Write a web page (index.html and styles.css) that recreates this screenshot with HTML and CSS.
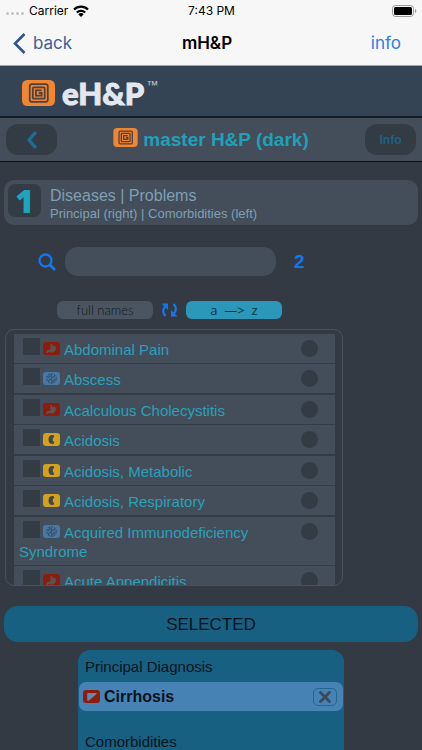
FILE: index.html
```html
<!DOCTYPE html>
<html lang="en">
<head>
<meta charset="utf-8">
<meta name="viewport" content="width=device-width, initial-scale=1">
<title>mH&amp;P</title>
<link rel="stylesheet" href="styles.css">
</head>
<body>
<svg class="defs" aria-hidden="true">
  <symbol id="logo" viewBox="0 0 32 25">
    <rect width="32" height="25" rx="5" fill="#f08532"/>
    <g fill="none" stroke="#4b433f" stroke-width="1.7">
      <rect x="7.5" y="4" width="17.500" height="17" rx="2"/>
      <rect x="10.500" y="7" width="11.500" height="11" rx="1"/>
      <path d="M19 10h-5.500v5H19v-2.500h-2.700"/>
    </g>
  </symbol>
  <symbol id="stomach" viewBox="0 0 17 13">
    <rect width="17" height="13" rx="3" fill="#8c1d0c"/>
    <path d="M7.500 2h1.700v2.500c.8-1.200 3.600-1.200 3.700 1 .2 3-2 5-4.800 5-1.400 0-2.200-.6-3-.3L4.500 11H3.300c0-2 1.200-3.200 2.700-3.200 1.700 0 2-1 1.500-2.600z" fill="#59545a"/>
  </symbol>
  <symbol id="germ" viewBox="0 0 17 13">
    <rect width="17" height="13" rx="3" fill="#4679a5"/>
    <circle cx="8.500" cy="6.500" r="4.700" fill="none" stroke="#344f69" stroke-width="1.200" stroke-dasharray="2 1"/>
    <path d="M5 6l3-3 1 3 3-2M5 9l3-2 1 3 3-3M8 6v2" fill="none" stroke="#344f69" stroke-width="1.100"/>
  </symbol>
  <symbol id="kidney" viewBox="0 0 17 13">
    <rect width="17" height="13" rx="3" fill="#d5a01b"/>
    <path d="M9.500 2C6.500 2 5.500 4 5.500 6.500S6.500 11 9.500 11c2 0 2.200-1.800 1-2.500-1-.7-1-3.300 0-4 1.200-.7 1-2.500-1-2.500z" fill="#3f4750"/>
  </symbol>
  <symbol id="liver" viewBox="0 0 17 13">
    <rect width="17" height="13" rx="3" fill="#8c1d0c"/>
    <path d="M5.500 3H13c.8 0 .8.800.3 1.300L6 10.500c-.8.600-1.800.3-1.800-.8V4.500C4.200 3.500 4.600 3 5.500 3z" fill="#6287b1"/>
  </symbol>
</svg>

<header class="phone-top">
  <div class="status">
    <div class="carrier">
      <span class="dots"><i></i><i></i><i></i><i></i></span>
      <span>Carrier</span>
      <svg class="wifi" viewBox="0 0 16 12" aria-hidden="true"><g fill="none" stroke="#000" stroke-width="2.200"><path d="M1 4.500a10 10 0 0 1 14 0"/><path d="M3.800 7.500a6 6 0 0 1 8.400 0"/></g><path d="M8 12L5.300 9.300a3.800 3.800 0 0 1 5.400 0z"/></svg>
    </div>
    <time>7:43 PM</time>
    <svg class="battery" viewBox="0 0 25 12" aria-hidden="true"><rect x=".5" y=".5" width="21" height="11" rx="3" fill="none" stroke="#999"/><rect x="2" y="2" width="18" height="8" rx="1.500"/><path d="M23 4c1.800.5 1.800 3.500 0 4z" fill="#999"/></svg>
  </div>
  <nav class="nav">
    <a class="back" href="#"><svg viewBox="0 0 13 21" aria-hidden="true"><path d="M11.500 1L2 10.500l9.500 9.500" fill="none" stroke="#2f5391" stroke-width="2.600"/></svg>back</a>
    <h1>mH&amp;P</h1>
    <a class="info" href="#">info</a>
  </nav>
</header>

<div class="brand">
  <svg class="brand-icon" aria-hidden="true"><use href="#logo"/></svg>
  <span class="brand-name">eH&amp;P</span><span class="tm">™</span>
</div>

<div class="titlebar">
  <button class="pill" type="button" aria-label="Back"><svg viewBox="0 0 12 20" aria-hidden="true"><path d="M10 2L3 10l7 8" fill="none" stroke="#1d6e91" stroke-width="3.400"/></svg></button>
  <h2><svg aria-hidden="true"><use href="#logo"/></svg>master H&amp;P (dark)</h2>
  <button class="pill" type="button">Info</button>
</div>

<main>
  <section class="step">
    <span class="step-number">1</span>
    <div>
      <h3>Diseases | Problems</h3>
      <p>Principal (right) | Comorbidities (left)</p>
    </div>
  </section>

  <div class="search">
    <label for="query"><svg viewBox="0 0 18 18" aria-label="Search"><g fill="none" stroke="#1677ea" stroke-width="2.300"><circle cx="7.500" cy="7.500" r="6"/><path d="M12 12l5 5" stroke-width="2.800"/></g></svg></label>
    <input id="query" type="text">
    <output for="query">2</output>
  </div>

  <div class="sort">
    <button class="names" type="button">full names</button>
    <button class="swap" type="button" aria-label="Refresh"><svg viewBox="0 0 17 14" aria-hidden="true"><g fill="none" stroke="#1677ea" stroke-width="2.400"><path d="M4.500 13C1.500 10 1.500 6 4.500 3"/><path d="M12.500 1c3 3 3 7 0 10"/></g><path d="M.5.500h6.500v6.500zM16.500 13.500h-6.500v-6.500z" fill="#1677ea"/></svg></button>
    <button class="order" type="button">a &nbsp;—&gt;&nbsp; z</button>
  </div>

  <div class="list-frame">
    <ul class="list">
      <li><label><input type="checkbox"><svg aria-hidden="true"><use href="#stomach"/></svg>Abdominal Pain</label><input type="radio" name="principal" aria-label="Principal: Abdominal Pain"></li>
      <li><label><input type="checkbox"><svg aria-hidden="true"><use href="#germ"/></svg>Abscess</label><input type="radio" name="principal" aria-label="Principal: Abscess"></li>
      <li><label><input type="checkbox"><svg aria-hidden="true"><use href="#stomach"/></svg>Acalculous Cholecystitis</label><input type="radio" name="principal" aria-label="Principal: Acalculous Cholecystitis"></li>
      <li><label><input type="checkbox"><svg aria-hidden="true"><use href="#kidney"/></svg>Acidosis</label><input type="radio" name="principal" aria-label="Principal: Acidosis"></li>
      <li><label><input type="checkbox"><svg aria-hidden="true"><use href="#kidney"/></svg>Acidosis, Metabolic</label><input type="radio" name="principal" aria-label="Principal: Acidosis, Metabolic"></li>
      <li><label><input type="checkbox"><svg aria-hidden="true"><use href="#kidney"/></svg>Acidosis, Respiratory</label><input type="radio" name="principal" aria-label="Principal: Acidosis, Respiratory"></li>
      <li><label><input type="checkbox"><svg aria-hidden="true"><use href="#germ"/></svg>Acquired Immunodeficiency Syndrome</label><input type="radio" name="principal" aria-label="Principal: Acquired Immunodeficiency Syndrome"></li>
      <li><label><input type="checkbox"><svg aria-hidden="true"><use href="#stomach"/></svg>Acute Appendicitis</label><input type="radio" name="principal" aria-label="Principal: Acute Appendicitis"></li>
    </ul>
  </div>

  <h2 class="selected-title">SELECTED</h2>
  <section class="selected">
    <h3>Principal Diagnosis</h3>
    <div class="chosen">
      <svg class="chosen-icon" aria-hidden="true"><use href="#liver"/></svg>
      <strong>Cirrhosis</strong>
      <button type="button" aria-label="Remove Cirrhosis"><svg viewBox="0 0 12 12" aria-hidden="true"><path d="M1.500 1.500l9 9M10.500 1.500l-9 9" stroke="#39495a" stroke-width="2.800" stroke-linecap="round"/></svg></button>
    </div>
    <h3>Comorbidities</h3>
  </section>
</main>
</body>
</html>
```
FILE: styles.css
```css
* { box-sizing: border-box; margin: 0; padding: 0; }

html { height: 100%; }

body {
  height: 100%;
  display: flex;
  flex-direction: column;
  overflow: hidden;
  background: #333a44;
  color: #2ba0b9;
  font-family: "Liberation Sans", Arial, sans-serif;
  font-size: 15px;
}

a { text-decoration: none; }
button, input { border: 0; font: inherit; }
svg { display: block; }
.defs { position: absolute; width: 0; height: 0; }
.phone-top, .brand, .titlebar { flex: none; }

/* Phone bars */
.phone-top {
  background: #f7f7f7;
  border-bottom: 1px solid #a5a8ab;
  color: #000;
  font-family: Inter, sans-serif;
}
.status {
  display: grid;
  grid-template-columns: 1fr auto 1fr;
  align-items: center;
  height: 21px;
  padding: 0 5px 0 6px;
  font-size: 12px;
}
.carrier { display: flex; align-items: center; gap: 5px; }
.dots { display: flex; gap: 2px; padding-top: 6px; }
.dots i { width: 3px; height: 3px; border-radius: 50%; background: #c3c3c3; }
.wifi { width: 16px; height: 12px; }
.battery { width: 25px; height: 12px; justify-self: end; }
.nav {
  display: grid;
  grid-template-columns: 1fr auto 1fr;
  align-items: center;
  height: 44px;
  padding: 0 21px 0 13px;
  font-size: 17px;
}
.nav h1 { font-size: 17px; font-weight: 600; }
.back { display: flex; align-items: center; gap: 7px; color: #3c5f9c; }
.back svg { width: 13px; height: 21px; }
.info { justify-self: end; color: #2b7de1; }

/* Brand strip */
.brand {
  display: flex;
  align-items: center;
  height: 50px;
  padding: 3px 22px 0;
  background: #344454;
}
.brand-icon { width: 33px; height: 26px; margin-right: 7px; }
.brand-name {
  color: #e3e7ee;
  font: 900 31px/44px Lato, sans-serif;
  -webkit-text-stroke: 1px #e3e7ee;
}
.tm { align-self: flex-start; margin: 8px 0 0 2px; color: #c4cad3; font: 12px/16px "Liberation Sans", sans-serif; }

.titlebar {
  display: flex;
  align-items: center;
  justify-content: space-between;
  height: 46px;
  padding: 0 6px;
  background: #434e5a;
  border-top: 2px solid #151d26;
  border-bottom: 1px solid #0b0f14;
}
.titlebar h2 { display: flex; align-items: center; gap: 5px; font-size: 19px; line-height: 24px; color: #20a0b9; }
.titlebar h2 svg { width: 25px; height: 19px; margin-bottom: 5px; }
.pill {
  display: flex;
  align-items: center;
  justify-content: center;
  width: 51px;
  height: 31px;
  border-radius: 12px;
  background: #333b45;
  color: #1f6282;
  font-size: 12px;
  font-weight: bold;
}
.pill svg { width: 12px; height: 20px; }

main { flex: 1 0 auto; display: flex; flex-direction: column; padding: 18px 4px 0; }

/* Step heading */
.step {
  display: flex;
  align-items: center;
  gap: 9px;
  height: 45px;
  padding: 2px 4px 0;
  border-radius: 10px;
  background: #434e5a;
  color: #819fb4;
}
.step-number {
  width: 33px;
  height: 33px;
  border-radius: 7px;
  background: #333b45;
  color: #1fa4bf;
  font: 800 32px/33px "Open Sans", sans-serif;
  text-align: center;
  align-self: flex-start;
  margin-top: 2px;
}
.step h3 { font-size: 16px; font-weight: normal; line-height: 19px; }
.step p { font-size: 13px; line-height: 17px; }

/* Search */
.search { display: flex; align-items: center; gap: 9px; margin-top: 22px; padding: 0 34px; }
.search svg { width: 18px; height: 18px; }
.search input {
  width: 211px;
  height: 29px;
  padding: 0 12px;
  border-radius: 13px;
  background: #434e5a;
  color: #9fc0d2;
}
.search output { padding-left: 9px; color: #1677ea; font-size: 19px; font-weight: bold; }

.sort { display: flex; align-items: center; gap: 8px; margin-top: 25px; padding: 0 53px; }
.names, .order {
  width: 96px;
  height: 18px;
  border-radius: 6px;
  line-height: 18px;
}
.names { background: #4b5561; color: #11161b; font-family: Lato, sans-serif; font-size: 13px; font-weight: 300; }
.order { background: #2b98b9; color: #0c3544; font-family: "Open Sans", sans-serif; font-size: 13px; }
.swap { background: none; }
.swap svg { width: 17px; height: 14px; }

/* Disease list */
.list-frame {
  height: 257px;
  flex: none;
  margin: 10px 75px 0 1px;
  padding: 4px 7px 0 8px;
  border: 1px solid #48525d;
  border-radius: 9px;
  overflow: hidden;
}
.list { background: #434e5a; list-style: none; }
.list li {
  display: flex;
  align-items: flex-start;
  padding: 4px 17px 4px 5px;
  border-bottom: 1px solid #333b45;
}
.list li:nth-child(even) { border-bottom-width: 2px; }
.list label { flex: 1; line-height: 19px; }
.list label svg { display: inline-block; width: 17px; height: 13px; margin: 0 4px 0 3px; vertical-align: 0; }
.list input { appearance: none; width: 17px; height: 17px; background: #333b45; }
.list input:checked { background: #1fa4bf; }
.list [type="checkbox"] { margin-left: 4px; vertical-align: 0; }
.list [type="radio"] { margin-top: 2px; border-radius: 50%; }

/* Selected */
.selected-title {
  margin-top: 20px;
  padding-top: 2px;
  border-radius: 14px;
  background: #176082;
  color: #06131b;
  font-size: 17px;
  font-weight: normal;
  line-height: 34px;
  text-align: center;
}
.selected {
  flex: 1;
  margin: 8px 74px 0;
  padding: 8px 1px 0;
  border-radius: 12px 12px 0 0;
  background: #176082;
  color: #06131b;
}
.selected h3 { padding-left: 6px; font-size: 15px; font-weight: normal; line-height: 18px; }
.chosen {
  display: flex;
  align-items: center;
  gap: 4px;
  height: 29px;
  margin: 6px 0 22px;
  padding: 0 6px 0 4px;
  border-radius: 7px;
  background: #4682b4;
  font-size: 16px;
}
.chosen-icon { width: 17px; height: 13px; }
.chosen strong { flex: 1; }
.chosen button {
  display: flex;
  align-items: center;
  justify-content: center;
  width: 24px;
  height: 18px;
  border: 1px solid #1f688f;
  border-radius: 5px;
  background: none;
}
.chosen button svg { width: 12px; height: 12px; }
```
